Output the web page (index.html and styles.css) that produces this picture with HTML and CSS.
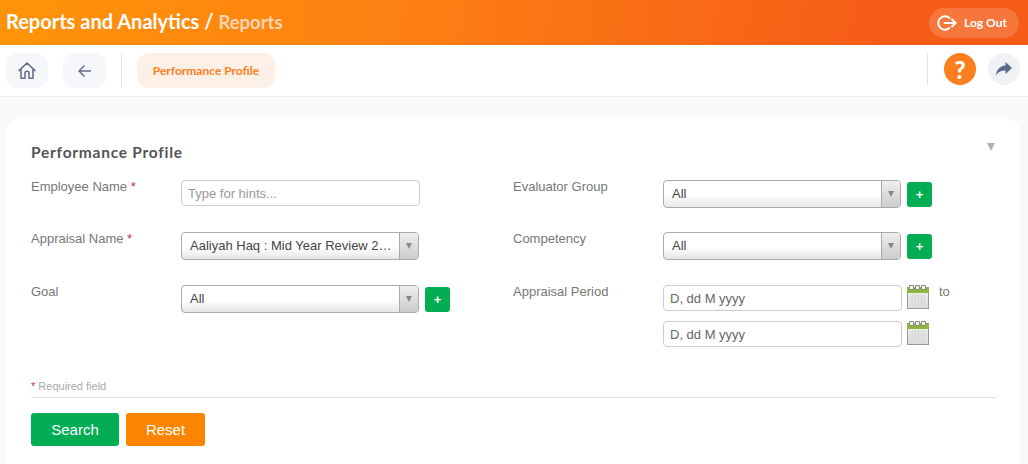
FILE: index.html
```html
<!DOCTYPE html>
<html lang="en">
<head>
<meta charset="utf-8">
<title>Performance Profile</title>
<link rel="stylesheet" href="styles.css">
</head>
<body>
<header class="topbar">
  <h1 class="crumb">Reports and Analytics / <span class="crumb-sub">Reports</span></h1>
  <button class="logout">
    <svg class="logout-icon" width="20" height="16" viewBox="0 0 20 16"><path d="M12.400 3A6.700 6.700 0 1 0 12.400 13" fill="none" stroke="#fff" stroke-width="2" stroke-linecap="round"/><path d="M7.500 8H18M15 4.600 18.600 8 15 11.400" fill="none" stroke="#fff" stroke-width="2" stroke-linecap="round" stroke-linejoin="round"/></svg>
    <span>Log Out</span>
  </button>
</header>
<nav class="toolbar">
  <button class="nav-btn home">
    <svg width="20" height="20" viewBox="0 0 20 20"><path d="M2 9.600 10 2l8 7.600M4 8v9.200h4v-5a2 2 0 0 1 4 0v5h4V8" fill="none" stroke="#5d6b8c" stroke-width="1.500" stroke-linejoin="round" stroke-linecap="round"/></svg>
  </button>
  <button class="nav-btn back">
    <svg width="16" height="16" viewBox="0 0 16 16"><path d="M14 8H2.500M7.500 2.500 2 8l5.500 5.500" fill="none" stroke="#5d6b8c" stroke-width="1.400"/></svg>
  </button>
  <span class="divider"></span>
  <a class="tab">Performance Profile</a>
  <span class="divider right"></span>
  <button class="round help">?</button>
  <button class="round share">
    <svg width="18" height="16" viewBox="0 0 18 16"><path d="M10.500 1 17 7l-6.500 6V9.400C6.500 9.400 3.500 10.500 1 14.500 1.500 9 4.500 5 10.500 4.500Z" fill="#5d6b8c"/></svg>
  </button>
</nav>
<main class="page">
  <section class="card">
    <div class="card-head">
      <h2 class="card-title">Performance Profile</h2>
      <span class="collapse"></span>
    </div>
    <form class="form">
      <div class="field">
        <label class="label">Employee Name <em class="req">*</em></label>
        <input class="input" type="text" placeholder="Type for hints...">
      </div>
      <div class="field">
        <label class="label">Evaluator Group</label>
        <div class="select"><span class="select-text">All</span><span class="select-arrow"></span></div>
        <button type="button" class="add">+</button>
      </div>
      <div class="field">
        <label class="label">Appraisal Name <em class="req">*</em></label>
        <div class="select"><span class="select-text">Aaliyah Haq : Mid Year Review 2025</span><span class="select-arrow"></span></div>
      </div>
      <div class="field">
        <label class="label">Competency</label>
        <div class="select"><span class="select-text">All</span><span class="select-arrow"></span></div>
        <button type="button" class="add">+</button>
      </div>
      <div class="field">
        <label class="label">Goal</label>
        <div class="select"><span class="select-text">All</span><span class="select-arrow"></span></div>
        <button type="button" class="add">+</button>
      </div>
      <div class="field">
        <label class="label">Appraisal Period</label>
        <div class="dates">
          <div class="date-row">
            <input class="input date" type="text" value="D, dd M yyyy">
            <svg class="cal" width="22" height="24" viewBox="0 0 22 24"><defs><linearGradient id="calbody" x1="0" y1="0" x2="0" y2="1"><stop offset="0" stop-color="#f2f2f2"/><stop offset="1" stop-color="#dcdcdc"/></linearGradient></defs><rect x=".5" y="2.500" width="21" height="21" fill="url(#calbody)" stroke="#999"/><rect x="0" y="2" width="22" height="6" fill="#8db63c"/><path d="M3 11h16M3 14h16M3 17h16M3 20h16M5.500 9v13M8.500 9v13M11.500 9v13M14.500 9v13M17.500 9v13" stroke="#d8d8d8"/><path d="M2.500 .5h4v4h-4zM8.500 .5h4v4h-4zM14.500 .5h4v4h-4z" fill="#f4f4f4" stroke="#8a8a7a"/></svg>
            <span class="to">to</span>
          </div>
          <div class="date-row">
            <input class="input date" type="text" value="D, dd M yyyy">
            <svg class="cal" width="22" height="24" viewBox="0 0 22 24"><rect x=".5" y="2.500" width="21" height="21" fill="url(#calbody)" stroke="#999"/><rect x="0" y="2" width="22" height="6" fill="#8db63c"/><path d="M3 11h16M3 14h16M3 17h16M3 20h16M5.500 9v13M8.500 9v13M11.500 9v13M14.500 9v13M17.500 9v13" stroke="#d8d8d8"/><path d="M2.500 .5h4v4h-4zM8.500 .5h4v4h-4zM14.500 .5h4v4h-4z" fill="#f4f4f4" stroke="#8a8a7a"/></svg>
          </div>
        </div>
      </div>
    </form>
    <p class="required"><em class="req">*</em> Required field</p>
    <div class="actions">
      <button class="btn search">Search</button>
      <button class="btn reset">Reset</button>
    </div>
  </section>
</main>
</body>
</html>
```
FILE: styles.css
```css
* { box-sizing: border-box; }
html, body { margin: 0; height: 464px; overflow: hidden; }
body { background: #f9f9f9; font-family: "Liberation Sans", Arial, sans-serif; color: #777; }
button { font-family: inherit; border: 0; padding: 0; }

.topbar {
  height: 45px;
  display: flex;
  align-items: center;
  justify-content: space-between;
  padding: 0 9px 0 6px;
  background: linear-gradient(100deg, #ff9408 0%, #fd7f13 40%, #f65c17 85%, #f65c17 100%);
}
.crumb { margin: 0; padding-bottom: 3px; font: 700 20px "Lato", sans-serif; color: #fff; }
.crumb-sub { color: #fcd6b4; font-weight: 700; font-size: 18.500px; }
.logout {
  width: 90px; height: 30px;
  display: flex; align-items: center; gap: 7px;
  padding-left: 8px;
  border-radius: 15px;
  background: rgba(255,255,255,.16);
  color: #fff;
  font: 700 12px "Lato", sans-serif;
}
.logout-icon { flex: none; }

.toolbar {
  height: 52px;
  display: flex;
  align-items: flex-start;
  padding: 8px 8px 0 6px;
  background: #fff;
  border-bottom: 1px solid #eee;
}
.nav-btn {
  height: 35px;
  display: flex; align-items: center; justify-content: center;
  border-radius: 12px;
  background: #f6f7fa;
}
.home { width: 42px; margin-right: 15px; }
.back { width: 43px; margin-right: 15px; }
.divider { width: 1px; height: 35px; background: #e6e6e6; margin-right: 15px; }
.divider.right { height: 32px; margin-left: auto; margin-right: 16px; }
.tab {
  width: 138px; height: 35px;
  display: flex; align-items: center; justify-content: center;
  border-radius: 12px;
  background: #fdf0e7;
  color: #fd7e1e;
  font: 700 12px "Lato", sans-serif;
}
.round {
  width: 32px; height: 32px;
  display: flex; align-items: center; justify-content: center;
  border-radius: 50%;
}
.help { background: #fd7e1e; color: #fff; font: 900 24px "Lato", sans-serif; margin-right: 12px; }
.share { background: #f0f1f5; }

.page { padding: 20px 8px 0 6px; }
.card {
  height: 360px;
  padding: 25px 25px 0;
  background: #fff;
  border-radius: 16px;
}
.card-head { height: 38px; display: flex; justify-content: space-between; align-items: flex-start; }
.card-title { margin: 0; font: 700 15.500px/20px "Lato", sans-serif; color: #555; letter-spacing: .75px; }
.collapse {
  width: 0; height: 0; margin-top: 1px;
  border-left: 4px solid transparent;
  border-right: 4px solid transparent;
  border-top: 8px solid #b0b0b0;
}

.form {
  display: grid;
  grid-template-columns: 482px 1fr;
  grid-template-rows: 52px 53px 88px;
}
.field { display: flex; align-items: flex-start; }
.label { width: 150px; flex: none; font-size: 13px; line-height: 14px; color: #777; }
.req { font-style: normal; color: #c0392b; }
.input {
  width: 239px; height: 26px;
  padding: 0 6px;
  border: 1px solid #ccc;
  border-radius: 4px;
  background: #fff;
  font: 13px "Liberation Sans", Arial, sans-serif;
  color: #555;
  outline: 0;
}
.input::placeholder { color: #999; opacity: 1; }
.select {
  width: 238px; height: 28px;
  display: flex;
  border: 1px solid #aaa;
  border-radius: 4px;
  overflow: hidden;
  background: linear-gradient(#fff 55%, #e6e6e6);
}
.select-text {
  flex: 1; min-width: 0;
  padding: 0 2px 0 8px;
  font-size: 13px; line-height: 26px;
  color: #444;
  white-space: nowrap; overflow: hidden; text-overflow: ellipsis;
}
.select-arrow {
  width: 19px; flex: none;
  border-left: 1px solid #aaa;
  background: linear-gradient(#eee, #ccc);
  display: flex; align-items: center; justify-content: center;
}
.select-arrow::after {
  content: "";
  border-left: 3.500px solid transparent;
  border-right: 3.500px solid transparent;
  border-top: 6px solid #888;
}
.add {
  width: 25px; height: 25px;
  margin: 2px 0 0 6px;
  border-radius: 3px;
  background: #03ad54;
  color: #fff;
  font: 700 13px/25px "Liberation Sans", Arial, sans-serif;
}
.dates { display: flex; flex-direction: column; gap: 10px; }
.date-row { display: flex; align-items: flex-start; height: 26px; }
.date { padding: 0 6px; color: #666; }
.cal { flex: none; margin: 0 0 0 5px; }
.to { margin-left: 10px; font-size: 13px; line-height: 14px; color: #777; }

.required {
  margin: 0;
  padding: 6px 0 5px;
  height: 25px;
  border-bottom: 1px solid #ddd;
  font-size: 11px; line-height: 14px;
  color: #aaa;
}
.actions { display: flex; gap: 7px; margin-top: 15px; }
.btn { height: 33px; border-radius: 3px; color: #fff; font-size: 15px; }
.search { width: 88px; background: #03ad54; }
.reset { width: 79px; background: #fb8500; }
```
